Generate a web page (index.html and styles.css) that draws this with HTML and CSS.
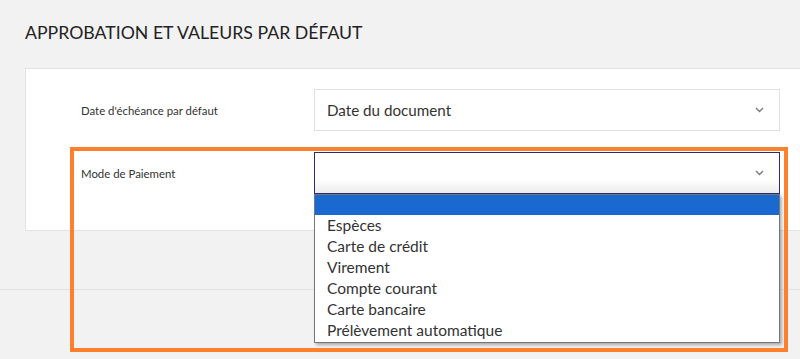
FILE: index.html
```html
<!DOCTYPE html>
<html lang="fr">
<head>
    <meta charset="UTF-8">
    <meta name="viewport" content="width=device-width, initial-scale=1.0">
    <title>Approbation et valeurs par défaut</title>
    <link rel="stylesheet" href="styles.css">
</head>
<body>
    <h2 class="section-title">APPROBATION ET VALEURS PAR DÉFAUT</h2>

    <div class="card">
        <div class="form-row">
            <label class="form-label">Date d'échéance par défaut</label>
            <div class="select">
                <span class="select-value">Date du document</span>
                <svg class="chevron" width="9" height="6" viewBox="0 0 9 6"><path d="M1 1l3.5 3.5L8 1" fill="none" stroke="#7a7a7a" stroke-width="1.4"/></svg>
            </div>
        </div>

        <div class="form-row">
            <label class="form-label">Mode de Paiement</label>
            <div class="select select-open">
                <span class="select-value"></span>
                <svg class="chevron" width="9" height="6" viewBox="0 0 9 6"><path d="M1 1l3.5 3.5L8 1" fill="none" stroke="#7a7a7a" stroke-width="1.4"/></svg>

                <!-- liste déroulante ouverte -->
                <ul class="dropdown">
                    <li class="option option-active"></li>
                    <li class="option">Espèces</li>
                    <li class="option">Carte de crédit</li>
                    <li class="option">Virement</li>
                    <li class="option">Compte courant</li>
                    <li class="option">Carte bancaire</li>
                    <li class="option">Prélèvement automatique</li>
                </ul>
            </div>
        </div>
    </div>

    <div class="footer"></div>

    <!-- cadre de mise en évidence -->
    <div class="highlight"></div>
</body>
</html>
```

FILE: styles.css
```css
body {
    margin: 0;
    padding: 0;
    height: 100vh;
    background: #f2f2f2;
    font-family: 'Lato', 'Open Sans', sans-serif;
    color: #333;
    overflow: hidden;
    position: relative;
}

.section-title {
    margin: 0;
    padding: 22px 25px 0;
    font-size: 17.7px;
    font-weight: normal;
    color: #222;
    line-height: 22px;
    height: 46px;
}

.card {
    margin-left: 25px;
    margin-right: -10px;
    background: #fff;
    border: 1px solid #e2e2e2;
    padding: 20px 0 36px 55px;
    display: flex;
    flex-direction: column;
    gap: 21px;
}

.form-row {
    display: grid;
    grid-template-columns: 233px 466px;
    align-items: center;
}

.form-label {
    font-size: 11.4px;
    color: #333;
}

.select {
    position: relative;
    height: 40px;
    border: 1px solid #e0e0e0;
    background: #fff;
    display: flex;
    align-items: center;
    padding: 0 12px;
}

.select-value {
    font-size: 15.2px;
    flex: 1;
}

.chevron {
    margin-right: 3px;
}

.select-open {
    border-color: #2d2a6e;
    background: linear-gradient(to bottom, #fff 65%, #ececec);
}

.dropdown {
    position: absolute;
    top: 41px;
    left: -1px;
    width: 464px;
    margin: 0;
    padding: 0 0 1px;
    list-style: none;
    background: #fff;
    border: 1px solid #777;
    box-shadow: 2px 2px 3px rgba(0, 0, 0, 0.3);
    z-index: 5;
}

.option {
    font-size: 15.5px;
    line-height: 21px;
    padding: 0 12px;
    color: #333;
}

.option-active {
    background: #1a69d1;
    height: 20px;
}

.footer {
    margin-top: 58px;
    border-top: 1px solid #e3e3e3;
    height: 80px;
}

.highlight {
    position: absolute;
    left: 70px;
    top: 147px;
    width: 710px;
    height: 197px;
    border: 4px solid #fe7f2c;
    z-index: 10;
    pointer-events: none;
}
```
